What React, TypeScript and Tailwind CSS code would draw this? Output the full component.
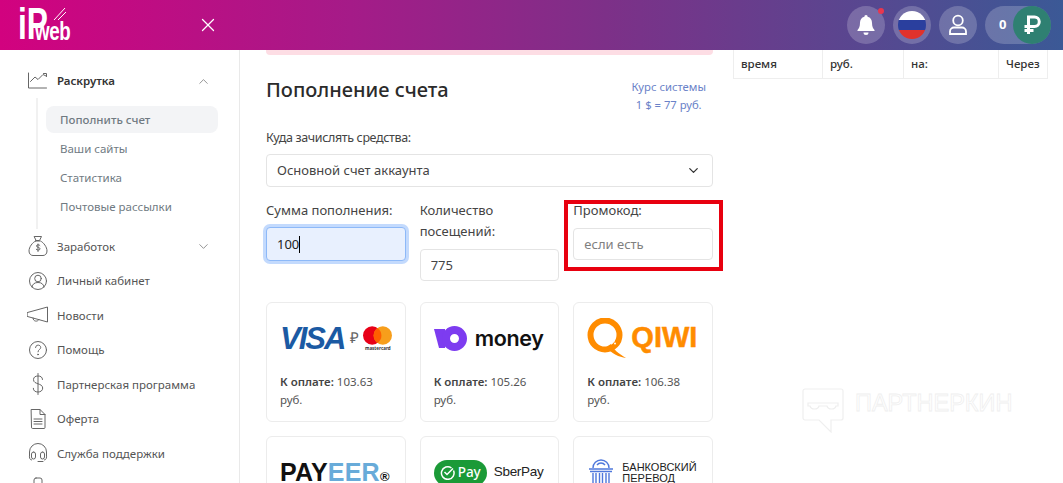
import React from "react";
import { ChevronUp, ChevronDown, X } from "lucide-react";

const Ic = ({ children }: { children: React.ReactNode }) => (
  <svg width="22" height="22" viewBox="0 0 22 22" fill="none" stroke="#666" strokeWidth="1" strokeLinecap="round" strokeLinejoin="round" className="shrink-0">
    {children}
  </svg>
);

const icons: Record<string, React.ReactNode> = {
  chart: <><path d="M1.500 3v15h18" /><path d="M3.500 11.500l4.500-4.500 3 2.500 5-5 3 1.500" /><path d="M16.500 3.500h3v3" /></>,
  bag: <><path d="M7.500 1.500h7l-2 4h-3z" /><path d="M8.500 6h5c3 1.500 6.500 6 6.500 10 0 3-2 4.500-4 4.500H6c-2 0-4-1.500-4-4.500 0-4 3.500-8.500 6.500-10z" /><path d="M13 10.500c-.5-1-3.500-1.200-3.500.5s3.500 1 3.500 2.800-3 1.600-3.800.5M11 9v7.500" /></>,
  user: <><circle cx="11" cy="11" r="8.500" /><circle cx="11" cy="8.500" r="3.300" /><path d="M5 17c.5-3 2.500-4.500 6-4.500s5.500 1.500 6 4.500" /></>,
  news: <><path d="M0.500 8.500l20-5.500v15l-20-5.500z" /><path d="M6 14c0 4 5 4 6 1.500" /></>,
  help: <><circle cx="11" cy="11" r="8.500" /><path d="M8.500 8.500c0-3.200 5.200-3.200 5.200 0 0 2-2.700 2-2.700 4.300" /><circle cx="11" cy="15.500" r=".5" /></>,
  dollar: <><path d="M15.500 6.500c0-2.500-2-3.500-4.500-3.500S6.500 4 6.500 6.700 9 10 11 10.800s4.700 1.500 4.700 4.200-2.200 4-4.700 4-4.700-1-4.700-3.700" /><path d="M11 .5v21" /></>,
  doc: <><path d="M4.500 1.500h8.500l5 5v13a1 1 0 0 1-1 1h-11.500a1 1 0 0 1-1-1z" /><path d="M13 1.500v5h5M7 11h8M7 13.500h8M7 16h8" /></>,
  support: <><path d="M2.500 13v-3a8.500 8.500 0 0 1 17 0v3" /><rect x="4.500" y="10" width="4" height="7" rx="2" /><rect x="13.500" y="10" width="4" height="7" rx="2" /><path d="M2.500 13c-.5 3 .5 5 2 5M19.500 13c.5 3-.5 5-2 5M16 19.500h-5" /></>,
  phone: <><rect x="7" y="1" width="8" height="20" rx="2" /></>,
};

const Item = ({ icon, label, chevron }: { icon: string; label: string; chevron?: boolean }) => (
  <div className="flex h-[34.500px] shrink-0 items-center gap-[8px] pl-[27px] pr-[28px] text-[#555]">
    <Ic>{icons[icon]}</Ic>
    <span className="flex-1 text-[11.500px]">{label}</span>
    {chevron && <ChevronDown size={15} strokeWidth={1} color="#555" />}
  </div>
);

const Sidebar = () => (
  <aside className="flex w-[240px] shrink-0 flex-col border-r border-[#e9e9e9] pt-[14px]">
    <div className="flex h-[34px] shrink-0 items-center gap-[8px] pl-[27px] pr-[28px] text-[#333]">
      <Ic>{icons.chart}</Ic>
      <span className="flex-1 text-[11.500px] font-semibold">Раскрутка</span>
      <ChevronUp size={15} strokeWidth={1} color="#555" />
    </div>
    <div className="ml-[36px] mr-[21px] flex shrink-0 flex-col border-l-2 border-[#f1f1f1] pb-[9px] pl-[8px] pt-[8px] text-[11.500px] text-[#707a82]">
      <div className="flex h-[27px] items-center rounded-lg bg-[#f3f4f6] pl-[14px] font-medium">Пополнить счет</div>
      <div className="flex h-[29px] items-center pl-[14px] pt-[3px]">Ваши сайты</div>
      <div className="flex h-[29px] items-center pl-[14px] pt-[3px]">Статистика</div>
      <div className="flex h-[29px] items-center pl-[14px] pt-[3px]">Почтовые рассылки</div>
    </div>
    <Item icon="bag" label="Заработок" chevron />
    <Item icon="user" label="Личный кабинет" />
    <Item icon="news" label="Новости" />
    <Item icon="help" label="Помощь" />
    <Item icon="dollar" label="Партнерская программа" />
    <Item icon="doc" label="Оферта" />
    <Item icon="support" label="Служба поддержки" />
    <Item icon="phone" label="" />
  </aside>
);

const VisaLogo = () => (
  <div className="flex items-center">
    <span className="font-['Liberation_Sans'] text-[31px] font-bold italic leading-none tracking-[-2px] text-[#1b5aa3]">VISA</span>
    <span className="ml-[6px] font-['Liberation_Serif'] text-[15px] text-[#666]">₽</span>
    <div className="ml-[4px] flex flex-col items-center">
      <svg width="29" height="19" viewBox="0 0 30 19">
        <circle cx="9.500" cy="9.500" r="9.500" fill="#e80017" />
        <circle cx="20.500" cy="9.500" r="9.500" fill="#f79e1b" />
        <path d="M15 1.700a9.500 9.500 0 0 1 0 15.600a9.500 9.500 0 0 1 0-15.600z" fill="#ff5f00" />
      </svg>
      <span className="text-[4.500px] font-bold leading-[6px] text-[#333]">mastercard</span>
    </div>
  </div>
);

const YooLogo = () => (
  <div className="flex items-center gap-[8px]">
    <svg width="33" height="25" viewBox="0 0 33 25">
      <path d="M0 3h11v19h-6z" fill="#7d3cf0" />
      <path fillRule="evenodd" d="M20.500 0a12.500 12.500 0 1 1 0 25a12.500 12.500 0 0 1-12.500-12.500a12.500 12.500 0 0 1 12.500-12.500zm0 8a4.500 4.500 0 1 0 0 9a4.500 4.500 0 0 0 0-9z" fill="#7d3cf0" />
    </svg>
    <span className="font-['Inter'] text-[21.500px] font-semibold leading-none tracking-[-.3px] text-[#111]">money</span>
  </div>
);

const QiwiLogo = () => (
  <div className="flex items-start gap-[3px]">
    <svg width="41" height="41" viewBox="0 0 41 41" fill="none">
      <circle cx="18" cy="17" r="14.500" stroke="#ff8c00" strokeWidth="6" />
      <path d="M24 26c3 6 7 9 15 14-7-1-14-4-20-11z" fill="#ff8c00" />
      <circle cx="26" cy="22" r="2" fill="#fff" />
      <circle cx="28" cy="25.500" r="1" fill="#fff" />
    </svg>
    <span className="mt-[5px] font-['Liberation_Sans'] text-[29px] font-bold leading-none text-[#ff8c00] [-webkit-text-stroke:.5px_#ff8c00]">QIWI</span>
  </div>
);

const PayCard = ({ logo, price }: { logo: React.ReactNode; price?: string }) => (
  <div className="flex h-[120px] flex-col rounded-md border border-[#ececec] px-[13px]">
    <div className="flex h-[69px] shrink-0 items-center pt-[2px]">{logo}</div>
    {price && (
      <p className="mt-[1px] text-[11.500px] leading-[18px] text-[#555]">
        <b className="font-semibold text-[#444]">К оплате:</b> {price}
        <br />
        руб.
      </p>
    )}
  </div>
);

const Bank = () => (
  <div className="flex items-center gap-[7px]">
    <svg width="28" height="28" viewBox="0 0 28 28" fill="none" stroke="#4f78dc" strokeWidth="1.400">
      <path d="M6 9a8 8 0 0 1 16 0" />
      <path d="M10 6a5 5 0 0 1 8 0" />
      <path d="M2 10h24M3 12.500h22M4 26h20M2 28h24" />
      <path d="M6 14v11M9 14v11M12.500 14v11M15.500 14v11M19 14v11M22 14v11" />
    </svg>
    <span className="font-['Liberation_Sans'] text-[11px] leading-[11px] text-[#222]">БАНКОВСКИЙ<br />ПЕРЕВОД</span>
  </div>
);

const Field = ({ children }: { children: React.ReactNode }) => (
  <div className="flex w-full flex-col">{children}</div>
);

const inputCls = "h-[32px] w-full rounded border border-[#e4e4e4] px-[10px] text-[13px] text-[#444] placeholder:text-[#808080] outline-none";

const Main = () => (
  <main className="w-[493px] shrink-0 px-[26px] pr-[20px]">
    <div className="h-[5px] w-[447px] rounded-b bg-[#fddde4]" />
    <div className="mt-[23px] flex w-[440px] items-start justify-between">
      <h1 className="text-[20px] font-medium leading-[24px] text-[#2b2b2b]">Пополнение счета</h1>
      <div className="text-center text-[11.250px] leading-[18px] text-[#6a82c8]">
        Курс системы
        <br />1 $ = 77 руб.
      </div>
    </div>
    <p className="mt-[13px] text-[12.500px] leading-[21px] tracking-[-.36px] text-[#444]">Куда зачислять средства:</p>
    <div className="mt-[6px] flex h-[33px] w-[447px] items-center justify-between rounded border border-[#e4e4e4] pl-[10px] pr-[11px] text-[13px] text-[#444]">
      Основной счет аккаунта
      <ChevronDown size={15} color="#333" />
    </div>
    <div className="mt-[13px] grid w-[447px] grid-cols-3 gap-x-[14px] text-[13px] leading-[21px] text-[#444]">
      <Field>
        <span>Сумма пополнения:</span>
        <div className="mt-[6px] flex h-[34px] w-full items-center rounded border border-[#8db9f8] bg-[#e8f0fe] pl-[10px] text-[13px] text-[#222] shadow-[0_0_0_3px_#c3dafd]">
          100<span className="h-[17px] w-px bg-black" />
        </div>
      </Field>
      <Field>
        <span>Количество посещений:</span>
        <input readOnly value="775" className={`${inputCls} mt-[7px]`} />
      </Field>
      <div className="relative">
        <Field>
          <span>Промокод:</span>
          <input readOnly placeholder="если есть" className={`${inputCls} mt-[7px]`} />
        </Field>
        <div className="absolute left-[-9px] top-0 h-[71px] w-[159px] border-4 border-[#e8000f]" />
      </div>
    </div>
    <div className="mt-[21px] grid w-[447px] grid-cols-3 gap-[14px]">
      <PayCard logo={<VisaLogo />} price="103.63" />
      <PayCard logo={<YooLogo />} price="105.26" />
      <PayCard logo={<QiwiLogo />} price="106.38" />
      <PayCard logo={<span className="font-['Liberation_Sans'] text-[25px] font-bold leading-none tracking-[.2px] text-[#111]">PAY<span className="text-[#68abd9]">EER</span><span className="text-[13px]">®</span></span>} />
      <PayCard
        logo={
          <div className="flex items-center gap-[7px]">
            <span className="flex h-[26px] items-center gap-[3px] rounded-full bg-[#1b9a37] px-[6px] text-[13.500px] font-medium text-white">
              <svg width="15" height="15" viewBox="0 0 15 15" fill="none" stroke="#fff" strokeWidth="1.500"><path d="M13.500 5.500a6.300 6.300 0 1 1-2-2.500" /><path d="M4.500 7l2.500 2.500 6-6" /></svg>
              Pay
            </span>
            <span className="font-['Liberation_Sans'] text-[13.500px] tracking-[-.3px] text-[#222]">SberPay</span>
          </div>
        }
      />
      <PayCard logo={<Bank />} />
    </div>
  </main>
);

const cell = "border border-[#eee] px-[7px] pb-[4px] pt-[2px]";

const RightTable = () => (
  <div className="flex-1">
    <table className="mt-[-21px] w-[314px] table-fixed border-collapse text-[11.500px] font-medium leading-[21px] text-[#333]">
      <tbody>
        <tr>
          <td className={`${cell} w-[89px] align-top`}>Дата и<br />время</td>
          <td className={`${cell} w-[81px] align-top`}>Сумма,<br />руб.</td>
          <td className={`${cell} w-[95px] align-top`}>Зачисл.<br />на:</td>
          <td className={`${cell} w-[49px] align-bottom`}>Через</td>
        </tr>
      </tbody>
    </table>
  </div>
);

const Header = () => (
  <header className="relative z-10 flex h-[50px] shrink-0 items-center bg-[linear-gradient(90deg,#d2027f,#a51b88_33%,#7d3088_57%,#3b5996)] pl-[18px] pr-[12px]">
    <div className="relative flex h-[50px] w-[179px] items-end pb-[10px] font-['Liberation_Sans'] font-bold leading-none text-white">
      <span className="inline-block w-[17px] origin-left scale-x-[.72] text-[44px] leading-[32px]">iP</span>
      <span className="inline-block origin-left scale-x-[.75] text-[25px] leading-[18px] tracking-[-.5px]">web</span>
      <svg width="14" height="14" viewBox="0 0 14 14" stroke="#fff" strokeWidth="1" className="absolute left-[35px] top-[7px]">
        <path d="M1 13L12 1M5 13L13 5" />
      </svg>
    </div>
    <X size={22} strokeWidth={1.400} color="#fff" />
    <div className="ml-auto flex items-center gap-[8px]">
      <div className="relative flex h-[38px] w-[38px] items-center justify-center rounded-full bg-white/20">
        <svg width="20" height="22" viewBox="0 0 20 22" fill="#fff"><path d="M10 1a1.600 1.600 0 0 1 1.600 1.800c3 .7 4.400 3 4.400 6 0 4 1 5.500 2.500 7.200v1H1.500v-1C3 14.300 4 12.800 4 8.800c0-3 1.400-5.300 4.400-6A1.600 1.600 0 0 1 10 1zM7.500 18.500h5a2.500 2.500 0 0 1-5 0z" /></svg>
        <span className="absolute right-[1px] top-[2px] h-[6px] w-[6px] rounded-full bg-[#e8374f]" />
      </div>
      <div className="flex h-[38px] w-[38px] items-center justify-center rounded-full bg-white/20">
        <div className="flex h-[28px] w-[28px] flex-col overflow-hidden rounded-full">
          <div className="flex-1 bg-white" />
          <div className="flex-1 bg-[#2a3f9e]" />
          <div className="flex-1 bg-[#e0322c]" />
        </div>
      </div>
      <div className="flex h-[38px] w-[38px] items-center justify-center rounded-full bg-white/20">
        <svg width="22" height="22" viewBox="0 0 22 22" fill="none" stroke="#fff" strokeWidth="1.800"><circle cx="11" cy="6.500" r="4.800" /><path d="M3 17.500c0-2.500 2-4 4-4h8c2 0 4 1.500 4 4v2.500H3z" /></svg>
      </div>
      <div className="flex h-[38px] w-[66px] items-center justify-between rounded-full bg-white/20 pl-[14px]">
        <span className="text-[13px] font-bold text-white">0</span>
        <span className="flex h-[38px] w-[38px] items-center justify-center rounded-full bg-[#2f8072]">
          <svg width="18" height="20" viewBox="0 0 18 20" fill="none" stroke="#fff" strokeWidth="3"><path d="M5.500 19V2h6a4.700 4.700 0 0 1 0 9.500H1.500M1.500 15.500h9" /></svg>
        </span>
      </div>
    </div>
  </header>
);

const Watermark = () => (
  <div className="pointer-events-none absolute left-[802px] top-[388px] flex items-start gap-[11px]">
    <svg width="42" height="45" viewBox="0 0 42 45" fill="none" stroke="#efefef" strokeWidth="1.200">
      <path d="M3 1h36a2 2 0 0 1 2 2v27a2 2 0 0 1-2 2H29v12L17 32H3a2 2 0 0 1-2-2V3a2 2 0 0 1 2-2z" />
      <path d="M6 15h30v3h-2c-1 4-8 4-9 0h-8c-1 4-8 4-9 0H6z" />
    </svg>
    <span className="mt-[3px] font-['Liberation_Sans'] text-[23.500px] leading-[24px] text-transparent [-webkit-text-stroke:.8px_#efefef]">ПАРТНЕРКИН</span>
  </div>
);

export default function App() {
  return (
    <div className="relative flex h-[483px] w-[1063px] flex-col overflow-hidden bg-white font-['Noto_Sans',sans-serif]">
      <Header />
      <div className="flex min-h-0 flex-1">
        <Sidebar />
        <Main />
        <RightTable />
      </div>
      <Watermark />
    </div>
  );
}
